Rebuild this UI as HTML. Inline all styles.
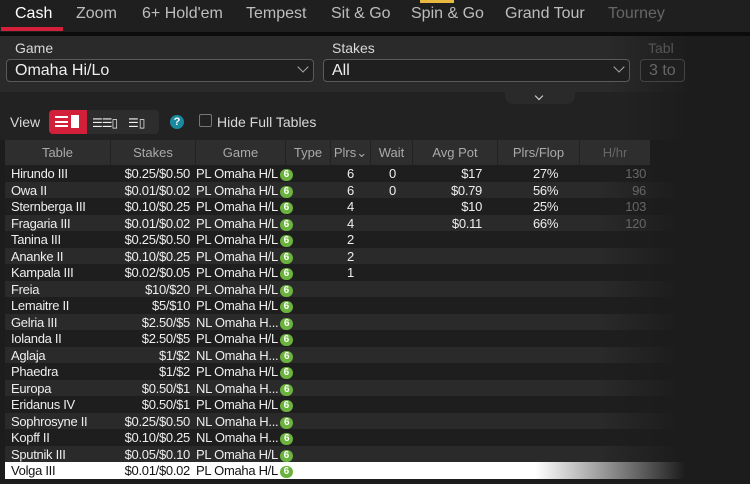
<!DOCTYPE html><html><head><style>
*{margin:0;padding:0;box-sizing:border-box}
body{width:750px;height:484px;background:#1c1c1c;font-family:"Liberation Sans",sans-serif;position:relative;overflow:hidden;color:#e8e8e8}
.tabs{position:absolute;left:0;top:0;width:750px;height:32px;background:#1f1f1f}
.tab{position:absolute;top:5px;font-size:16px;color:#bdbdbd}
.bar{position:absolute;left:0;top:32px;width:750px;height:4px;background:#0c0c0c}
.panel{position:absolute;left:0;top:36px;width:690px;height:56px;background:linear-gradient(90deg,#2a2a2a 0%,#2a2a2a 88%,#1c1c1c 100%)}
.lbl{position:absolute;font-size:14px;color:#d8d8d8}
.sel{position:absolute;height:23px;border:1px solid #5a5a5a;border-radius:4px;background:#1f1f1f;font-size:16px;color:#eee;padding:2px 8px}
.chev{position:absolute;right:6px;top:3px;width:8px;height:8px;border-right:1.5px solid #aaa;border-bottom:1.5px solid #aaa;transform:rotate(45deg)}
.mid{position:absolute;left:0;top:92px;width:690px;height:48px;background:linear-gradient(90deg,#222 0%,#222 90%,#1c1c1c 100%)}
.hdr{position:absolute;left:5px;top:140px;width:645px;height:25px;background:#2e2e2e}
.hc{position:absolute;font-size:13px;color:#aaa;text-align:center;border-left:1px solid #222;height:25px;top:0;padding-top:5px}
.row{position:absolute;left:5px;height:16.5px;font-size:13px;color:#eee;white-space:nowrap;letter-spacing:-0.3px}
.c{position:absolute;top:1px}
.r{display:inline-block;text-align:right}
.b6{display:inline-block;margin-left:2px;width:13px;height:12px;border-radius:6px;background:#6cb33e;color:#fff;font-size:10px;font-weight:bold;text-align:center;line-height:12px;vertical-align:1px;letter-spacing:0}
</style></head><body>
<div class="tabs">
<div class="tab" style="left:15px;color:#fff">Cash</div>
<div style="position:absolute;left:1px;top:27px;width:62px;height:4px;background:#d3203a"></div>
<div class="tab" style="left:76px">Zoom</div>
<div class="tab" style="left:142px">6+ Hold'em</div>
<div class="tab" style="left:246px">Tempest</div>
<div class="tab" style="left:331px">Sit &amp; Go</div>
<div style="position:absolute;left:420px;top:0;width:34px;height:3px;background:#e8b840"></div>
<div class="tab" style="left:411px">Spin &amp; Go</div>
<div class="tab" style="left:505px">Grand Tour</div>
<div class="tab" style="left:608px;color:#666">Tourney</div>
</div>
<div class="bar"></div>
<div class="panel">
<div class="lbl" style="left:15px;top:4px">Game</div>
<div class="lbl" style="left:332px;top:4px">Stakes</div>
<div class="lbl" style="left:648px;top:4px;color:#555">Tabl</div>
<div class="sel" style="left:6px;top:23px;width:308px">Omaha Hi/Lo<div class="chev"></div></div>
<div class="sel" style="left:323px;top:23px;width:307px">All<div class="chev"></div></div>
<div class="sel" style="left:640px;top:23px;width:45px;color:#666;border-color:#444">3 to</div>
</div>
<div class="mid">
<div style="position:absolute;left:505px;top:0;width:70px;height:12px;background:#2a2a2a;border-radius:0 0 8px 8px"></div>
<div style="position:absolute;left:536px;top:1px;width:6px;height:6px;border-right:1.5px solid #ddd;border-bottom:1.5px solid #ddd;transform:rotate(45deg)"></div>
<div class="lbl" style="left:10px;top:22px">View</div>
<div style="position:absolute;left:49px;top:18px;width:38px;height:24px;background:#d3203a;border-radius:4px 0 0 4px"></div>
<div style="position:absolute;left:87px;top:18px;width:72px;height:24px;background:#2d2d2d;border-radius:0 4px 4px 0"></div>
<div style="position:absolute;left:55px;top:24px;width:13px;height:11px;border-top:2px solid #fff;border-bottom:2px solid #fff"><div style="margin-top:2.5px;height:2px;background:#fff"></div></div>
<div style="position:absolute;left:71px;top:23px;width:8px;height:13px;background:#fff"></div>
<div style="position:absolute;left:92px;top:24px;font-size:12px;color:#eee;letter-spacing:-1px">☰☰▯</div>
<div style="position:absolute;left:128px;top:24px;font-size:12px;color:#eee">☰▯</div>
<div style="position:absolute;left:170px;top:23px;width:14px;height:14px;border-radius:7px;background:#1a8aa0;color:#fff;font-size:11px;font-weight:bold;text-align:center;line-height:14px">?</div>
<div style="position:absolute;left:199px;top:22px;width:13px;height:13px;border:1px solid #777;border-radius:2px"></div>
<div class="lbl" style="left:217px;top:22px">Hide Full Tables</div>
</div>
<div class="hdr">
<div class="hc" style="left:0;width:105px;border:none">Table</div>
<div class="hc" style="left:105px;width:85px">Stakes</div>
<div class="hc" style="left:190px;width:90px">Game</div>
<div class="hc" style="left:280px;width:45px">Type</div>
<div class="hc" style="left:325px;width:40px">Plrs⌄</div>
<div class="hc" style="left:365px;width:42px">Wait</div>
<div class="hc" style="left:407px;width:85px">Avg Pot</div>
<div class="hc" style="left:492px;width:82px">Plrs/Flop</div>
<div class="hc" style="left:574px;width:71px;color:#666">H/hr</div>
</div>
<div id="rows"></div>
<script>
var d=[["Hirundo III","$0.25/$0.50","PL Omaha H/L","6","0","$17","27%","130"],
["Owa II","$0.01/$0.02","PL Omaha H/L","6","0","$0.79","56%","96"],
["Sternberga III","$0.10/$0.25","PL Omaha H/L","4","","$10","25%","103"],
["Fragaria III","$0.01/$0.02","PL Omaha H/L","4","","$0.11","66%","120"],
["Tanina III","$0.25/$0.50","PL Omaha H/L","2"],["Ananke II","$0.10/$0.25","PL Omaha H/L","2"],
["Kampala III","$0.02/$0.05","PL Omaha H/L","1"],["Freia","$10/$20","PL Omaha H/L"],
["Lemaitre II","$5/$10","PL Omaha H/L"],["Gelria III","$2.50/$5","NL Omaha H..."],
["Iolanda II","$2.50/$5","PL Omaha H/L"],["Aglaja","$1/$2","NL Omaha H..."],
["Phaedra","$1/$2","PL Omaha H/L"],["Europa","$0.50/$1","NL Omaha H..."],
["Eridanus IV","$0.50/$1","PL Omaha H/L"],["Sophrosyne II","$0.25/$0.50","NL Omaha H..."],
["Kopff II","$0.10/$0.25","NL Omaha H..."],["Sputnik III","$0.05/$0.10","PL Omaha H/L"],
["Volga III","$0.01/$0.02","PL Omaha H/L"]];
var h="";
d.forEach(function(r,i){
var y=165+i*16.5;var last=i==18;
var bg=last?"linear-gradient(90deg,#fff 0%,#fff 78%,#1c1c1c 100%)":(i%2?"linear-gradient(90deg,#2a2a2a 88%,#1c1c1c 100%)":"linear-gradient(90deg,#1e1e1e 88%,#1c1c1c 100%)");
var col=last?"#111":"#eee";
h+='<div class="row" style="top:'+y+'px;background:'+bg+';color:'+col+';width:'+(last?680:675)+'px">'+
'<span class="c" style="left:6px">'+r[0]+'</span>'+
'<span class="c r" style="left:95px;width:90px">'+r[1]+'</span>'+
'<span class="c" style="left:191px">'+r[2]+'<span class="b6">6</span></span>'+
(r[3]?'<span class="c" style="left:342px">'+r[3]+'</span>':'')+
(r[4]?'<span class="c" style="left:384px">'+r[4]+'</span>':'')+
(r[5]?'<span class="c r" style="left:397px;width:80px">'+r[5]+'</span>':'')+
(r[6]?'<span class="c" style="left:528px">'+r[6]+'</span>':'')+
(r[7]?'<span class="c r" style="left:586px;width:55px;color:#666">'+r[7]+'</span>':'')+
'</div>';});
document.getElementById("rows").innerHTML=h;
</script>
</body></html>
